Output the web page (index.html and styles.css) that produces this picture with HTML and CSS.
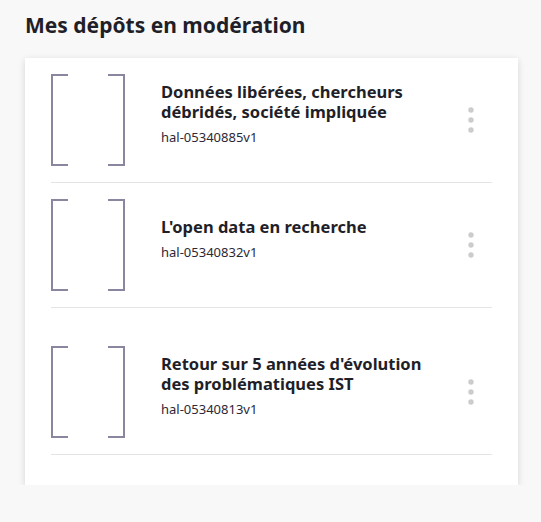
FILE: index.html
```html
<!DOCTYPE html>
<html lang="fr">
<head>
<meta charset="utf-8">
<title>Mes dépôts en modération</title>
<link rel="stylesheet" href="styles.css">
</head>
<body>
<main class="page">
  <h1 class="heading">Mes dépôts en modération</h1>
  <section class="card">
    <article class="row">
      <svg class="thumb" width="74" height="92" viewBox="0 0 74 92" aria-hidden="true"><path d="M17 1H1V91H17M57 1H73V91H57" fill="none" stroke="#8a86a0" stroke-width="2"/></svg>
      <div class="info">
        <h2 class="title">Données libérées, chercheurs débridés, société impliquée</h2>
        <p class="ref">hal-05340885v1</p>
      </div>
      <button class="menu" aria-label="Actions"><svg width="6" height="26" viewBox="0 0 6 26"><circle cx="3" cy="3" r="2.7" fill="#cccccc"/><circle cx="3" cy="13" r="2.7" fill="#cccccc"/><circle cx="3" cy="23" r="2.7" fill="#cccccc"/></svg></button>
    </article>
    <article class="row">
      <svg class="thumb" width="74" height="92" viewBox="0 0 74 92" aria-hidden="true"><path d="M17 1H1V91H17M57 1H73V91H57" fill="none" stroke="#8a86a0" stroke-width="2"/></svg>
      <div class="info">
        <h2 class="title">L'open data en recherche</h2>
        <p class="ref">hal-05340832v1</p>
      </div>
      <button class="menu" aria-label="Actions"><svg width="6" height="26" viewBox="0 0 6 26"><circle cx="3" cy="3" r="2.7" fill="#cccccc"/><circle cx="3" cy="13" r="2.7" fill="#cccccc"/><circle cx="3" cy="23" r="2.7" fill="#cccccc"/></svg></button>
    </article>
    <article class="row row-tall">
      <svg class="thumb" width="74" height="92" viewBox="0 0 74 92" aria-hidden="true"><path d="M17 1H1V91H17M57 1H73V91H57" fill="none" stroke="#8a86a0" stroke-width="2"/></svg>
      <div class="info">
        <h2 class="title">Retour sur 5 années d'évolution des problématiques IST</h2>
        <p class="ref">hal-05340813v1</p>
      </div>
      <button class="menu" aria-label="Actions"><svg width="6" height="26" viewBox="0 0 6 26"><circle cx="3" cy="3" r="2.7" fill="#cccccc"/><circle cx="3" cy="13" r="2.7" fill="#cccccc"/><circle cx="3" cy="23" r="2.7" fill="#cccccc"/></svg></button>
    </article>
  </section>
</main>
</body>
</html>
```
FILE: styles.css
```css
html, body {
  margin: 0;
  padding: 0;
  background: #f8f8f8;
  font-family: "Noto Sans", "Open Sans", sans-serif;
  color: #1f1f29;
}

.page {
  padding: 10px 23px 0 25px;
}

.heading {
  margin: 0 0 18px;
  font-size: 21px;
  line-height: 30px;
  font-weight: 700;
  color: #1f1f29;
}

.card {
  background: #ffffff;
  padding: 16px 26px 30px;
  box-shadow: 0 2px 7px rgba(0, 0, 0, 0.14);
}

.row {
  display: flex;
  align-items: center;
  padding: 16px 0;
  border-bottom: 1px solid #e4e4e4;
}

.row:first-child {
  padding-top: 0;
}

.row-tall {
  padding-top: 38px;
}

.thumb {
  flex: none;
  display: block;
}

.info {
  flex: 1;
  margin-left: 36px;
  padding-bottom: 13px;
}

.title {
  margin: 0;
  font-size: 16.5px;
  line-height: 20px;
  font-weight: 700;
  color: #1f1f29;
  max-width: 270px;
}

.ref {
  margin: 6px 0 0;
  font-size: 13px;
  line-height: 18px;
  color: #2b2838;
}

.menu {
  flex: none;
  width: 42px;
  padding: 0;
  border: 0;
  background: none;
  display: flex;
  justify-content: center;
}

.menu svg {
  display: block;
}
```
